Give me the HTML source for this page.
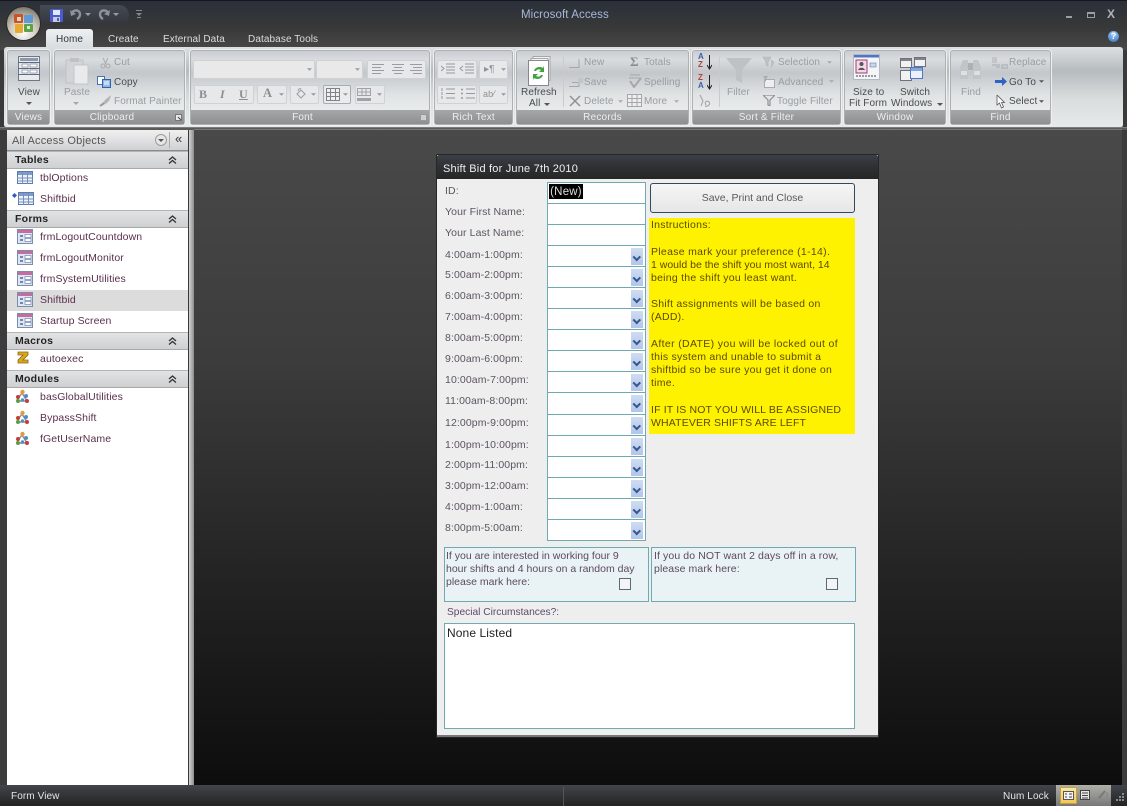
<!DOCTYPE html>
<html><head><meta charset="utf-8"><title>Microsoft Access</title>
<style>
html,body{margin:0;padding:0;background:#333}
#r{position:relative;width:1127px;height:806px;overflow:hidden;background:#3a3a3a;font-family:"Liberation Sans",sans-serif;font-size:10.5px;letter-spacing:.25px;color:#444}
#r div,#r span.a,#r svg.a{position:absolute}
.t{white-space:nowrap;line-height:13px}
.grp{top:50px;height:75px;background:linear-gradient(#c9cdd1 0,#d9dcdf 12%,#c3c7cb 30%,#dfe3e4 60%,#e8eced 82%);border:1px solid #aeb1b3;border-radius:3px;box-sizing:border-box;box-shadow:0 0 0 1px #eef0f0;font-size:10px;letter-spacing:.1px}
.cap{left:0;right:0;bottom:0;height:14px;background:linear-gradient(#a5a7a8,#8d8f90);color:#eee;text-align:center;line-height:16px;font-size:10px;letter-spacing:.2px;box-sizing:border-box}
.dis{color:#9a9d9f}
.en{color:#4a4c4e}
.box{background:#e6e8ea;border:1px solid #cfd2d4;border-radius:2px;box-sizing:border-box}
.sec{left:0;height:16px;background:linear-gradient(#e2e3e4,#cfd0d1);border-top:1px solid #b4b5b6;border-bottom:1px solid #a8a9aa;color:#222;font-weight:bold;font-size:10.5px;line-height:16px;padding-left:8px;width:173px}
.nav{left:33px;color:#5a2f4c;font-size:10.5px;letter-spacing:.1px;white-space:nowrap;line-height:15px}
.fld{left:547px;width:99px;background:#fff;border:1px solid #6fa9b1;box-sizing:border-box}
.lb{left:445px;color:#5c5460;white-space:nowrap;font-size:10.5px;letter-spacing:.1px;line-height:15px}
.dd{left:83px;top:2px;width:12px;height:17px;background:linear-gradient(#cfdcf2,#b2c6ea)}
.dd:after{content:"";position:absolute;left:3px;top:6px;width:3.5px;height:3.5px;border-right:2px solid #36588f;border-bottom:2px solid #36588f;transform:rotate(45deg)}
.y{left:651px;color:#5a4a00;white-space:nowrap;font-size:10.5px;line-height:15px}
.tab{top:33px;color:#dcdcdc;font-size:10px;letter-spacing:.1px}
</style></head><body>
<div id="r">
<svg width="0" height="0" style="position:absolute"><defs>
<symbol id="fi" viewBox="0 0 16 15"><rect x=".5" y=".5" width="15" height="14" fill="#dfe6f2" stroke="#7c8cab"/><rect x="1" y="1" width="14" height="3" fill="#c46d9e"/><rect x="3" y="6" width="3" height="2" fill="#6e87b3"/><rect x="3" y="10" width="3" height="2" fill="#6e87b3"/><rect x="8" y="5.500" width="6" height="3" fill="#fff" stroke="#6e87b3" stroke-width=".7"/><rect x="8" y="9.500" width="6" height="3" fill="#fff" stroke="#6e87b3" stroke-width=".7"/></symbol>
<symbol id="tb" viewBox="0 0 16 13"><rect x=".5" y=".5" width="15" height="12" fill="#eef2fa" stroke="#5f7bab"/><rect x="1" y="1" width="14" height="3" fill="#7f9bc9"/><path d="M0 7h16M0 10h16M5.500 1v12M10.500 1v12" stroke="#7590bb" stroke-width="1"/></symbol>
<symbol id="md" viewBox="0 0 15 14"><path d="M2 11L7 4M7 4l5 8M3 12h9" stroke="#8f8f8f" stroke-width="1.500" fill="none"/><circle cx="7.500" cy="3" r="2.200" fill="#e39a3d"/><circle cx="3" cy="8" r="2" fill="#c63d33"/><circle cx="11" cy="7" r="2" fill="#4b8fcf"/><circle cx="3" cy="12" r="2" fill="#5a9e48"/><circle cx="12" cy="12" r="2" fill="#c63d33"/><circle cx="7.500" cy="11" r="1.700" fill="#4b8fcf"/></symbol>
<symbol id="dn" viewBox="0 0 6 3"><path d="M0 0h6L3 3z"/></symbol>
<symbol id="ch" viewBox="0 0 9 8"><path d="M1 4l3.500-3L8 4M1 7.500l3.500-3L8 7.500" fill="none" stroke="#333" stroke-width="1.300"/></symbol>
</defs></svg>

<!-- title bar -->
<div style="left:0;top:0;width:1127px;height:27px;background:linear-gradient(#2a2f3a 0,#2f3339 40%,#383838 100%)"></div>
<div style="left:0;top:27px;width:1127px;height:23px;background:linear-gradient(#383838,#484848)"></div>
<div style="left:0;top:0;width:1127px;height:1px;background:#15171c"></div>
<div style="left:40px;top:5px;width:89px;height:20px;background:linear-gradient(#444a55,#34363b);border-radius:0 11px 11px 0"></div>

<!-- office button -->
<div style="left:7px;top:7px;width:33px;height:33px;border-radius:50%;background:radial-gradient(circle at 50% 78%,#fff 0,#ccc6b8 45%,#8f8a7f 75%,#57534c 100%);box-shadow:0 0 0 1px #2a2a2a"></div>
<svg class="a" style="left:13px;top:13px" width="22" height="22" viewBox="0 0 22 22"><rect x="1" y="1" width="9" height="9" rx="1" fill="#c9542a"/><rect x="11" y="2" width="9" height="8" rx="1" fill="#5d9ad6"/><rect x="2" y="11" width="8" height="9" rx="1" fill="#e9a92f"/><rect x="11" y="11" width="9" height="8" rx="1" fill="#5fa04a"/><rect x="4" y="4" width="4" height="4" fill="#f3d4b5"/><rect x="14" y="13" width="3" height="3" fill="#d6ecc9"/></svg>

<!-- QAT -->
<svg class="a" style="left:50px;top:9px" width="13" height="13" viewBox="0 0 13 13"><rect width="13" height="13" rx="1" fill="#4a5bd0"/><rect x="3" y="1" width="7" height="5" fill="#dfe6ff"/><rect x="3" y="8" width="7" height="5" fill="#c9cbd6"/><rect x="7" y="9" width="2" height="3" fill="#4a5bd0"/></svg>
<svg class="a" style="left:70px;top:8px" width="12" height="13" viewBox="0 0 12 13"><path d="M2 5C4 1 10 2 10 6c0 2-1 4-3 5" fill="none" stroke="#8e939a" stroke-width="2.400"/><path d="M0 2l1 6 5-2z" fill="#8e939a"/></svg>
<svg class="a" style="left:85px;top:13px" width="6" height="3"><use href="#dn" fill="#9a9ea3"/></svg>
<svg class="a" style="left:98px;top:8px" width="12" height="13" viewBox="0 0 12 13"><path d="M10 5C8 1 2 2 2 6c0 2 1 4 3 5" fill="none" stroke="#8e939a" stroke-width="2.400"/><path d="M12 2l-1 6-5-2z" fill="#8e939a"/></svg>
<svg class="a" style="left:113px;top:13px" width="6" height="3"><use href="#dn" fill="#9a9ea3"/></svg>
<svg class="a" style="left:136px;top:10px" width="6" height="9" viewBox="0 0 6 9"><path d="M0 0h6v1H0zM0 3h6L3 6z M1 7h4v1H1z" fill="#85888c"/></svg>

<div class="t" style="left:521px;top:9px;color:#a8b8d8;font-size:11.500px;letter-spacing:.1px">Microsoft Access</div>

<!-- window buttons -->
<div style="left:1066px;top:16px;width:6px;height:2px;background:#9b9ea2"></div>
<div style="left:1087px;top:12px;width:8px;height:6px;border:1px solid #9b9ea2;border-top-width:2px;box-sizing:border-box"></div>
<div class="t" style="left:1107px;top:8px;color:#b0b3b7;font-weight:bold;font-size:12px">X</div>

<!-- tabs -->
<div style="left:46px;top:29px;width:47px;height:19px;background:linear-gradient(#eef1f3,#d7dde0);border-radius:3px 3px 0 0"></div>
<div class="t tab" style="left:56px;color:#333">Home</div>
<div class="t tab" style="left:108px">Create</div>
<div class="t tab" style="left:163px">External Data</div>
<div class="t tab" style="left:248px">Database Tools</div>
<div style="left:1108px;top:31px;width:11px;height:11px;border-radius:50%;background:radial-gradient(circle at 50% 30%,#a9cdf2,#2b6fc0);color:#fff;font-size:9px;font-weight:bold;line-height:11px;text-align:center;letter-spacing:0">?</div>

<!-- ribbon -->
<div style="left:4px;top:47px;width:1119px;height:81px;background:linear-gradient(#dde0e2 0,#b6bbbf 30%,#d9dddd 65%,#e6eaea 100%);border-radius:3px;border-bottom:1px solid #888;box-sizing:border-box"></div>

<!-- Views -->
<div class="grp" style="left:7px;width:43px"><div class="cap">Views</div>
<svg class="a" style="left:10px;top:5px" width="22" height="25" viewBox="0 0 22 25"><rect x=".5" y=".5" width="21" height="24" fill="#e8eaee" stroke="#6f7886"/><path d="M0 6.500h22M0 12.500h22M0 18.500h22" stroke="#5f6b80"/><rect x="2" y="2" width="18" height="3" fill="#8d98aa"/><rect x="4" y="8" width="6" height="3" fill="#fff" stroke="#7c8797" stroke-width=".7"/><rect x="12" y="8" width="7" height="3" fill="#fff" stroke="#7c8797" stroke-width=".7"/><rect x="4" y="14" width="6" height="3" fill="#fff" stroke="#7c8797" stroke-width=".7"/><rect x="12" y="14" width="7" height="3" fill="#fff" stroke="#7c8797" stroke-width=".7"/></svg>
<div class="t en" style="left:10px;top:35px">View</div>
<svg class="a" style="left:18px;top:51px" width="6" height="3"><use href="#dn" fill="#555"/></svg></div>

<!-- Clipboard -->
<div class="grp" style="left:54px;width:131px"><div class="cap" style="padding-right:15px">Clipboard</div>
<svg class="a" style="left:10px;top:6px" width="24" height="28" viewBox="0 0 24 28"><rect x="1" y="3" width="17" height="23" fill="#d2d4d6" stroke="#c0c2c4"/><rect x="9" y="8" width="14" height="19" fill="#e9eaeb" stroke="#c4c6c8"/><rect x="5" y="1" width="9" height="4" fill="#bfc1c3"/></svg>
<div class="t dis" style="left:9px;top:35px">Paste</div>
<svg class="a" style="left:18px;top:51px" width="6" height="3"><use href="#dn" fill="#a5a7a9"/></svg>
<svg class="a" style="left:45px;top:6px" width="11" height="12" viewBox="0 0 11 12"><path d="M3 1l3 6M8 1L5 7" stroke="#a9acae" fill="none"/><circle cx="3" cy="9" r="2" fill="none" stroke="#a9acae"/><circle cx="8" cy="9" r="2" fill="none" stroke="#a9acae"/></svg>
<div class="t dis" style="left:59px;top:5px">Cut</div>
<svg class="a" style="left:42px;top:25px" width="14" height="12" viewBox="0 0 14 12"><rect x=".5" y=".5" width="7" height="8" fill="#fff" stroke="#3f74b5"/><rect x="5.500" y="3.500" width="8" height="8" fill="#8fb6e6" stroke="#2f62a8"/><path d="M7 6h5M7 8h5" stroke="#fff"/></svg>
<div class="t en" style="left:59px;top:25px">Copy</div>
<svg class="a" style="left:44px;top:43px" width="13" height="13" viewBox="0 0 13 13"><path d="M3 12C3 8 7 5 12 1c-1 5-3 8-6 9z" fill="#b3b5b7"/><path d="M1 12l4-3" stroke="#9b9d9f" stroke-width="2"/></svg>
<div class="t dis" style="left:59px;top:44px">Format Painter</div>
<svg class="a" style="left:120px;top:63px" width="7" height="7" viewBox="0 0 7 7"><rect x=".5" y=".5" width="6" height="6" fill="#e8e8e8" stroke="#777"/><path d="M3 3l3 3" stroke="#444"/></svg></div>

<!-- Font -->
<div class="grp" style="left:190px;width:240px"><div class="cap" style="padding-right:15px">Font</div>
<div class="box" style="left:2px;top:9px;width:122px;height:19px;background:#e9e9ea"></div>
<div class="box" style="left:125px;top:9px;width:47px;height:19px;background:#e9e9ea"></div>
<svg class="a" style="left:116px;top:17px" width="5" height="3"><use href="#dn" fill="#999"/></svg>
<svg class="a" style="left:164px;top:17px" width="5" height="3"><use href="#dn" fill="#999"/></svg>
<div class="box" style="left:176px;top:9px;width:59px;height:19px"></div>
<svg class="a" style="left:181px;top:13px" width="50" height="11" viewBox="0 0 50 11"><path d="M0 .5h12M0 3.500h9M0 6.500h12M0 9.500h9M20 .5h12M22 3.500h8M20 6.500h12M22 9.500h8M38 .5h12M41 3.500h9M38 6.500h12M41 9.500h9" stroke="#9a9c9f"/></svg>
<div class="box" style="left:3px;top:34px;width:60px;height:19px"></div>
<div class="t" style="left:8px;top:37px;font-weight:bold;font-family:'Liberation Serif',serif;color:#8c8e90;font-size:12px">B</div>
<div class="t" style="left:29px;top:37px;font-style:italic;font-family:'Liberation Serif',serif;color:#8c8e90;font-size:12px;font-weight:bold">I</div>
<div class="t" style="left:48px;top:37px;text-decoration:underline;font-weight:bold;font-family:'Liberation Serif',serif;color:#8c8e90;font-size:12px">U</div>
<div class="box" style="left:66px;top:34px;width:30px;height:19px"></div>
<div class="t" style="left:72px;top:36px;font-weight:bold;font-family:'Liberation Serif',serif;color:#8c8e90;font-size:12.500px">A</div>
<svg class="a" style="left:88px;top:42px" width="5" height="3"><use href="#dn" fill="#999"/></svg>
<div class="box" style="left:99px;top:34px;width:29px;height:19px"></div>
<svg class="a" style="left:104px;top:37px" width="12" height="12" viewBox="0 0 12 12"><path d="M2 6l4-4 4 4-4 4z" fill="none" stroke="#9a9c9f"/><path d="M6 1c-1-1-3 0-3 2" stroke="#9a9c9f" fill="none"/></svg>
<svg class="a" style="left:120px;top:42px" width="5" height="3"><use href="#dn" fill="#999"/></svg>
<div class="box" style="left:132px;top:34px;width:28px;height:19px;background:#e9ebec;border-color:#a9acae"></div>
<svg class="a" style="left:135px;top:37px" width="14" height="13" viewBox="0 0 14 13"><path d="M.5.5h13v12H.5zM.5 4.500h13M.5 8.500h13M4.500.5v12M9.500.5v12" fill="#f0f0f0" stroke="#808286"/></svg>
<svg class="a" style="left:152px;top:42px" width="5" height="3"><use href="#dn" fill="#999"/></svg>
<div class="box" style="left:164px;top:34px;width:30px;height:19px"></div>
<svg class="a" style="left:166px;top:37px" width="14" height="13" viewBox="0 0 14 13"><path d="M.5.500h13v7H.5zM.5 4h13M5 .5v7M9 .5v7" fill="none" stroke="#a0a2a5"/><rect y="10" width="14" height="3" fill="#a0a2a5"/></svg>
<svg class="a" style="left:186px;top:42px" width="5" height="3"><use href="#dn" fill="#999"/></svg>
<svg class="a" style="left:229px;top:63px" width="7" height="7" viewBox="0 0 7 7"><rect x=".5" y=".5" width="6" height="6" fill="#cfcfcf" stroke="#999"/></svg></div>

<!-- Rich Text -->
<div class="grp" style="left:434px;width:79px"><div class="cap">Rich Text</div>
<div class="box" style="left:2px;top:9px;width:40px;height:19px"></div>
<div class="box" style="left:44px;top:9px;width:29px;height:19px"></div>
<div class="box" style="left:2px;top:34px;width:40px;height:19px"></div>
<div class="box" style="left:44px;top:34px;width:29px;height:19px"></div>
<svg class="a" style="left:6px;top:12px" width="34" height="12" viewBox="0 0 34 12"><path d="M5 1h9M5 4h9M5 7h9M5 10h9M0 3l3 2.500L0 8M24 1h9M24 4h9M24 7h9M24 10h9M22 3l-3 2.500L22 8" stroke="#96989b" fill="none"/></svg>
<div class="t" style="left:49px;top:12px;color:#909295;font-size:10px">▸¶</div>
<svg class="a" style="left:66px;top:17px" width="5" height="3"><use href="#dn" fill="#999"/></svg>
<svg class="a" style="left:6px;top:37px" width="34" height="12" viewBox="0 0 34 12"><path d="M5 1h9M5 5.500h9M5 10h9M1 0v3M1 4v3M1 8v3M25 1h9M25 5.500h9M25 10h9" stroke="#96989b" fill="none"/><circle cx="21" cy="1.500" r="1" fill="#96989b"/><circle cx="21" cy="5.500" r="1" fill="#96989b"/><circle cx="21" cy="10" r="1" fill="#96989b"/></svg>
<div class="t" style="left:48px;top:37px;color:#909295;font-size:9px">ab⁄</div>
<svg class="a" style="left:66px;top:42px" width="5" height="3"><use href="#dn" fill="#999"/></svg></div>

<!-- Records -->
<div class="grp" style="left:516px;width:173px"><div class="cap">Records</div>
<svg class="a" style="left:11px;top:5px" width="24" height="30" viewBox="0 0 24 30"><rect x="5" y=".5" width="17" height="24" fill="#f4f4f4" stroke="#a5a7aa"/><rect x="3" y="2.500" width="17" height="24" fill="#f6f6f6" stroke="#a5a7aa"/><rect x=".5" y="4.500" width="20" height="25" fill="#fff" stroke="#85888c"/><path d="M6 15c1-4 6-5 9-3l1-2v6h-5l2-2c-2-1-4-1-5 1zM15 19c-1 4-6 5-9 3l-1 2v-6h5l-2 2c2 1 4 1 5-1z" fill="#3fa33f"/></svg>
<div class="t en" style="left:4px;top:35px">Refresh</div>
<div class="t en" style="left:12px;top:46px">All</div>
<svg class="a" style="left:27px;top:52px" width="6" height="3"><use href="#dn" fill="#555"/></svg>
<div style="left:46px;top:6px;width:1px;height:50px;background:#c8cacc"></div>
<svg class="a" style="left:52px;top:7px" width="14" height="11" viewBox="0 0 14 11"><path d="M0 9.500h10M10 1v9" stroke="#a5a7a9" fill="none"/></svg>
<div class="t dis" style="left:67px;top:5px">New</div>
<svg class="a" style="left:52px;top:26px" width="14" height="11" viewBox="0 0 14 11"><path d="M0 9.500h10M3 5.500h7M10 1v9" stroke="#a5a7a9" fill="none"/><rect x="9" y="1" width="5" height="5" fill="#c3c5c7"/></svg>
<div class="t dis" style="left:67px;top:25px">Save</div>
<svg class="a" style="left:52px;top:44px" width="12" height="12" viewBox="0 0 12 12"><path d="M1 1l10 10M11 1L1 11" stroke="#8f9194" stroke-width="1.500"/></svg>
<div class="t dis" style="left:67px;top:44px">Delete</div>
<svg class="a" style="left:101px;top:49px" width="5" height="3"><use href="#dn" fill="#aaa"/></svg>
<div class="t" style="left:113px;top:4px;color:#8a8c8f;font-size:13px;font-family:'Liberation Serif',serif;font-weight:bold">Σ</div>
<div class="t dis" style="left:127px;top:5px">Totals</div>
<svg class="a" style="left:111px;top:23px" width="15" height="14" viewBox="0 0 15 14"><path d="M1 4h12M2 1h10" stroke="#a5a7a9"/><path d="M2 7l4 6 7-9" stroke="#a5a7a9" stroke-width="2" fill="none"/></svg>
<div class="t dis" style="left:127px;top:25px">Spelling</div>
<svg class="a" style="left:110px;top:43px" width="15" height="13" viewBox="0 0 15 13"><path d="M.5.5h14v12H.5zM.5 4.500h14M.5 8.500h14M5 .5v12M10 .5v12" fill="#eee" stroke="#a5a7a9"/></svg>
<div class="t dis" style="left:127px;top:44px">More</div>
<svg class="a" style="left:157px;top:49px" width="5" height="3"><use href="#dn" fill="#aaa"/></svg></div>

<!-- Sort -->
<div class="grp" style="left:692px;width:149px"><div class="cap">Sort &amp; Filter</div>
<div class="t" style="left:5px;top:2px;font-size:8px;line-height:8px;color:#3d5fa8;font-weight:bold;white-space:normal;width:8px;letter-spacing:0">A<br><span style="color:#b2413b">Z</span></div>
<svg class="a" style="left:14px;top:4px" width="5" height="15" viewBox="0 0 5 15"><path d="M2.500 0v13M0 10l2.500 4L5 10" stroke="#222" fill="none"/></svg>
<div class="t" style="left:5px;top:23px;font-size:8px;line-height:8px;color:#b2413b;font-weight:bold;white-space:normal;width:8px;letter-spacing:0">Z<br><span style="color:#3d5fa8">A</span></div>
<svg class="a" style="left:14px;top:24px" width="5" height="15" viewBox="0 0 5 15"><path d="M2.500 0v13M0 10l2.500 4L5 10" stroke="#222" fill="none"/></svg>
<svg class="a" style="left:5px;top:43px" width="15" height="14" viewBox="0 0 15 14"><path d="M2 1l3 6-2 5M7 12c3 1 6-2 4-4s-5 0-3 3" stroke="#9da0a3" fill="none"/></svg>
<div style="left:26px;top:6px;width:1px;height:50px;background:#c8cacc"></div>
<svg class="a" style="left:33px;top:7px" width="26" height="26" viewBox="0 0 26 26"><path d="M0 0h26L16 12v13l-6-3V12z" fill="#bfc2c5"/></svg>
<div class="t dis" style="left:34px;top:35px">Filter</div>
<svg class="a" style="left:69px;top:5px" width="13" height="13" viewBox="0 0 13 13"><path d="M1 1h8L6 6v4L4 9V6zM9 4l3 2-3 6" fill="#bfc2c5" stroke="#b0b3b5" stroke-width=".6"/></svg>
<div class="t dis" style="left:85px;top:5px">Selection</div>
<svg class="a" style="left:134px;top:10px" width="5" height="3"><use href="#dn" fill="#aaa"/></svg>
<svg class="a" style="left:69px;top:25px" width="13" height="12" viewBox="0 0 13 12"><rect x="2.500" y="3.500" width="10" height="8" fill="#eee" stroke="#a9acae"/><path d="M1 0h5L4 3v3L3 5V3z" fill="#a9acae"/></svg>
<div class="t dis" style="left:85px;top:25px">Advanced</div>
<svg class="a" style="left:136px;top:29px" width="5" height="3"><use href="#dn" fill="#aaa"/></svg>
<svg class="a" style="left:70px;top:44px" width="12" height="11" viewBox="0 0 12 11"><path d="M0 0h12L7 5v6L5 10V5z" fill="none" stroke="#8f9194" stroke-width="1.200"/></svg>
<div class="t dis" style="left:84px;top:44px">Toggle Filter</div></div>

<!-- Window -->
<div class="grp" style="left:844px;width:102px"><div class="cap">Window</div>
<svg class="a" style="left:8px;top:3px" width="27" height="26" viewBox="0 0 27 26"><rect x=".5" y=".5" width="26" height="25" fill="#f5f5f7" stroke="#b4b7c4"/><rect x="1" y="1" width="25" height="2.500" fill="#4e76c6"/><rect x="3" y="6" width="11" height="13" fill="#f2d9e6" stroke="#a03a72"/><circle cx="8.500" cy="10" r="2" fill="#555"/><path d="M5 16c1-3 6-3 7 0" fill="#555"/><rect x="17" y="9" width="6" height="4" fill="#c9d5ea" stroke="#7a8fb5" stroke-width=".7"/><path d="M3 22h20" stroke="#7a7f8a" stroke-dasharray="2 1" stroke-width="1.500"/></svg>
<svg class="a" style="left:55px;top:6px" width="26" height="25" viewBox="0 0 26 25"><rect x=".5" y="1.500" width="11" height="9" fill="#f2f2f2" stroke="#6f7278"/><rect x="1" y="2" width="10" height="2" fill="#7f8287"/><rect x=".5" y="13.500" width="11" height="10" fill="#f2f2f2" stroke="#6f7278"/><rect x="14.500" y=".5" width="11" height="9" fill="#f2f2f2" stroke="#6f7278"/><rect x="15" y="1" width="10" height="2" fill="#7f8287"/><rect x="10.500" y="10.500" width="12" height="11" fill="#eaf1fb" stroke="#4e76c6"/><rect x="11" y="11" width="11" height="3" fill="#83a6de"/></svg>
<div class="t en" style="left:8px;top:35px">Size to</div>
<div class="t en" style="left:4px;top:46px">Fit Form</div>
<div class="t en" style="left:55px;top:35px">Switch</div>
<div class="t en" style="left:46px;top:46px">Windows</div>
<svg class="a" style="left:92px;top:52px" width="6" height="3"><use href="#dn" fill="#555"/></svg></div>

<!-- Find -->
<div class="grp" style="left:950px;width:101px"><div class="cap">Find</div>
<svg class="a" style="left:7px;top:5px" width="25" height="25" viewBox="0 0 25 25"><path d="M2 23V11l3-7h5v19zM15 23V4h5l3 7v12z" fill="#c2c5c7"/><rect x="10" y="7" width="5" height="7" fill="#aeb1b3"/><path d="M3 17h6M16 17h6" stroke="#dde0e1" stroke-width="4"/></svg>
<div class="t dis" style="left:10px;top:35px">Find</div>
<svg class="a" style="left:41px;top:6px" width="16" height="12" viewBox="0 0 16 12"><rect x="0" y="0" width="5" height="6" fill="#c3c5c7"/><path d="M0 8h8M4 10h4M10 8h6v3h-6z" stroke="#a9acae" fill="none"/></svg>
<div class="t dis" style="left:58px;top:5px">Replace</div>
<svg class="a" style="left:44px;top:26px" width="12" height="9" viewBox="0 0 12 9"><path d="M0 3h7V0l5 4.500L7 9V6H0z" fill="#2e62c4"/></svg>
<div class="t en" style="left:58px;top:25px">Go To</div>
<svg class="a" style="left:88px;top:29px" width="5" height="3"><use href="#dn" fill="#555"/></svg>
<svg class="a" style="left:45px;top:44px" width="10" height="14" viewBox="0 0 10 14"><path d="M1 0v10l2.500-2 2 5 2-1-2-4.500H8.500z" fill="#fff" stroke="#555" stroke-width=".8"/></svg>
<div class="t en" style="left:58px;top:44px">Select</div>
<svg class="a" style="left:88px;top:49px" width="5" height="3"><use href="#dn" fill="#555"/></svg></div>

<!-- frame around -->
<div style="left:0;top:128px;width:1127px;height:2px;background:#5a5a58"></div>
<div style="left:0;top:127px;width:1127px;height:1px;background:#7c7c7a"></div>
<div style="left:189px;top:130px;width:5px;height:655px;background:linear-gradient(90deg,#d3d3d3,#aaa 60%,#8c8c8c)"></div>

<!-- main -->
<div style="left:194px;top:129px;width:928px;height:656px;background:linear-gradient(#494949 0,#3c3c3c 35%,#222 70%,#0d0d0d 100%);border-top:1px solid #7b7b75;box-sizing:border-box"></div>
<div style="left:1122px;top:130px;width:5px;height:655px;background:#3c3c3c"></div>
<div style="left:0;top:130px;width:7px;height:655px;background:#3c3c3c"></div>

<!-- nav pane -->
<div style="left:7px;top:130px;width:181px;height:655px;background:#fff">
<div style="left:0;top:0;width:181px;height:21px;background:linear-gradient(#f0f0f1,#d0d1d3);border-bottom:1px solid #8a8b8c;box-sizing:border-box"></div>
<div class="t" style="left:5px;top:5px;color:#555;font-size:11px;letter-spacing:.2px">All Access Objects</div>
<div style="left:148px;top:4px;width:12px;height:12px;border:1px solid #9a9b9d;border-radius:50%;box-sizing:border-box;background:#e6e6e7"></div>
<svg class="a" style="left:151px;top:9px" width="6" height="3"><use href="#dn" fill="#555"/></svg>
<div style="left:162px;top:2px;width:1px;height:16px;background:#aaa"></div>
<div class="t" style="left:168px;top:2px;color:#333;font-size:13px;font-weight:normal;letter-spacing:0">«</div>

<div class="sec" style="top:21px">Tables<svg class="a" style="left:161px;top:4px" width="9" height="8"><use href="#ch"/></svg></div>
<svg class="a" style="left:10px;top:41px" width="16" height="13"><use href="#tb"/></svg>
<div class="nav" style="top:41px">tblOptions</div>
<svg class="a" style="left:5px;top:63px" width="5" height="5" viewBox="0 0 5 5"><path d="M2.500 0L5 2.500 2.500 5 0 2.500z" fill="#2a5fc0"/></svg>
<svg class="a" style="left:11px;top:62px" width="16" height="13"><use href="#tb"/></svg>
<div class="nav" style="top:62px">Shiftbid</div>

<div class="sec" style="top:80px">Forms<svg class="a" style="left:161px;top:4px" width="9" height="8"><use href="#ch"/></svg></div>
<svg class="a" style="left:10px;top:99px" width="16" height="15"><use href="#fi"/></svg>
<div class="nav" style="top:100px">frmLogoutCountdown</div>
<svg class="a" style="left:10px;top:120px" width="16" height="15"><use href="#fi"/></svg>
<div class="nav" style="top:121px">frmLogoutMonitor</div>
<svg class="a" style="left:10px;top:141px" width="16" height="15"><use href="#fi"/></svg>
<div class="nav" style="top:142px">frmSystemUtilities</div>
<div style="left:0;top:160px;width:181px;height:21px;background:#dcdcdc"></div>
<svg class="a" style="left:10px;top:162px" width="16" height="15"><use href="#fi"/></svg>
<div class="nav" style="top:163px">Shiftbid</div>
<svg class="a" style="left:10px;top:183px" width="16" height="15"><use href="#fi"/></svg>
<div class="nav" style="top:184px">Startup Screen</div>

<div class="sec" style="top:202px">Macros<svg class="a" style="left:161px;top:4px" width="9" height="8"><use href="#ch"/></svg></div>
<svg class="a" style="left:10px;top:221px" width="12" height="13" viewBox="0 0 12 13"><path d="M1 1h10v3L6 9h5v3H1V9l5-5H1z" fill="#d9a520" stroke="#8a6a10" stroke-width=".8"/></svg>
<div class="nav" style="top:222px">autoexec</div>

<div class="sec" style="top:240px">Modules<svg class="a" style="left:161px;top:4px" width="9" height="8"><use href="#ch"/></svg></div>
<svg class="a" style="left:8px;top:259px" width="15" height="14"><use href="#md"/></svg>
<div class="nav" style="top:260px">basGlobalUtilities</div>
<svg class="a" style="left:8px;top:280px" width="15" height="14"><use href="#md"/></svg>
<div class="nav" style="top:281px">BypassShift</div>
<svg class="a" style="left:8px;top:301px" width="15" height="14"><use href="#md"/></svg>
<div class="nav" style="top:302px">fGetUserName</div>
</div>

<!-- form -->
<div style="left:437px;top:155px;width:441px;height:582px;background:#eeeeee;box-shadow:0 0 0 1px #262626;border-bottom:2px solid #777;box-sizing:border-box"></div>
<div style="left:437px;top:155px;width:441px;height:24px;background:linear-gradient(#3d4048,#33353a 30%,#262626);border-radius:2px 2px 0 0"></div>
<div class="t" style="left:443px;top:163px;color:#f0f0f0;font-size:11px;letter-spacing:.2px">Shift Bid for June 7th 2010</div>

<div class="lb" style="top:184px">ID:</div>
<div class="lb" style="top:205px">Your First Name:</div>
<div class="lb" style="top:226px">Your Last Name:</div>
<div class="lb" style="top:248px">4:00am-1:00pm:</div>
<div class="lb" style="top:268px">5:00am-2:00pm:</div>
<div class="lb" style="top:289px">6:00am-3:00pm:</div>
<div class="lb" style="top:310px">7:00am-4:00pm:</div>
<div class="lb" style="top:331px">8:00am-5:00pm:</div>
<div class="lb" style="top:352px">9:00am-6:00pm:</div>
<div class="lb" style="top:373px">10:00am-7:00pm:</div>
<div class="lb" style="top:394px">11:00am-8:00pm:</div>
<div class="lb" style="top:416px">12:00pm-9:00pm:</div>
<div class="lb" style="top:438px">1:00pm-10:00pm:</div>
<div class="lb" style="top:458px">2:00pm-11:00pm:</div>
<div class="lb" style="top:479px">3:00pm-12:00am:</div>
<div class="lb" style="top:500px">4:00pm-1:00am:</div>
<div class="lb" style="top:521px">8:00pm-5:00am:</div>

<div class="fld" style="top:182px;height:22px"></div>
<div style="left:549px;top:184px;width:34px;height:15px;background:#000;color:#ddd;font-size:11.500px;line-height:16px;text-align:center;letter-spacing:.2px">(New)</div>
<div class="fld" style="top:203px;height:22px"></div>
<div class="fld" style="top:224px;height:22px"></div>
<div class="fld" style="top:245px;height:22px"><div class="dd"></div></div>
<div class="fld" style="top:266px;height:22px"><div class="dd"></div></div>
<div class="fld" style="top:287px;height:22px"><div class="dd"></div></div>
<div class="fld" style="top:308px;height:22px"><div class="dd"></div></div>
<div class="fld" style="top:329px;height:22px"><div class="dd"></div></div>
<div class="fld" style="top:350px;height:22px"><div class="dd"></div></div>
<div class="fld" style="top:371px;height:22px"><div class="dd"></div></div>
<div class="fld" style="top:392px;height:23px"><div class="dd"></div></div>
<div class="fld" style="top:414px;height:22px"><div class="dd"></div></div>
<div class="fld" style="top:435px;height:22px"><div class="dd"></div></div>
<div class="fld" style="top:456px;height:22px"><div class="dd"></div></div>
<div class="fld" style="top:477px;height:22px"><div class="dd"></div></div>
<div class="fld" style="top:498px;height:22px"><div class="dd"></div></div>
<div class="fld" style="top:519px;height:22px"><div class="dd"></div></div>

<!-- button -->
<div style="left:650px;top:183px;width:205px;height:30px;background:linear-gradient(#f6f6f6,#e6e6e6);border:1px solid #2d4a5e;border-radius:3px;box-sizing:border-box;text-align:center;line-height:29px;color:#5a5a5a;font-size:10.500px;letter-spacing:0">Save, Print and Close</div>

<!-- yellow -->
<div style="left:649px;top:218px;width:206px;height:216px;background:#fff200"></div>
<div class="y" style="top:218px">Instructions:</div>
<div class="y" style="top:245px;letter-spacing:.3px">Please mark your preference (1-14).</div>
<div class="y" style="top:258px;letter-spacing:0">1 would be the shift you most want, 14</div>
<div class="y" style="top:271px;letter-spacing:.25px">being the shift you least want.</div>
<div class="y" style="top:297px">Shift assignments will be based on</div>
<div class="y" style="top:310px">(ADD).</div>
<div class="y" style="top:337px;letter-spacing:.35px">After (DATE) you will be locked out of</div>
<div class="y" style="top:350px">this system and unable to submit a</div>
<div class="y" style="top:363px">shiftbid so be sure you get it done on</div>
<div class="y" style="top:376px">time.</div>
<div class="y" style="top:403px;letter-spacing:.15px">IF IT IS NOT YOU WILL BE ASSIGNED</div>
<div class="y" style="top:416px;letter-spacing:.15px">WHATEVER SHIFTS ARE LEFT</div>

<!-- option boxes -->
<div style="left:444px;top:547px;width:205px;height:55px;background:#e9f2f5;border:1px solid #6fa9b1;box-sizing:border-box"></div>
<div style="left:651px;top:547px;width:205px;height:55px;background:#e9f2f5;border:1px solid #6fa9b1;box-sizing:border-box"></div>
<div class="lb" style="left:446px;top:549px;color:#5c4a5e;letter-spacing:0">If you are interested in working four 9</div>
<div class="lb" style="left:446px;top:562px;color:#5c4a5e;letter-spacing:0">hour shifts and 4 hours on a random day</div>
<div class="lb" style="left:446px;top:575px;color:#5c4a5e;letter-spacing:0">please mark here:</div>
<div class="lb" style="left:654px;top:549px;color:#5c4a5e;letter-spacing:.1px">If you do NOT want 2 days off in a row,</div>
<div class="lb" style="left:654px;top:562px;color:#5c4a5e;letter-spacing:.1px">please mark here:</div>
<div style="left:619px;top:578px;width:12px;height:12px;background:#f2f4f6;border:1px solid #5b6a7a;box-sizing:border-box"></div>
<div style="left:826px;top:578px;width:12px;height:12px;background:#f2f4f6;border:1px solid #5b6a7a;box-sizing:border-box"></div>

<div class="lb" style="left:447px;top:605px;color:#5c4a6a;font-size:10.200px;letter-spacing:0">Special Circumstances?:</div>
<div style="left:444px;top:623px;width:411px;height:106px;background:#fff;border:1px solid #6fa9b1;box-sizing:border-box"></div>
<div class="t" style="left:447px;top:627px;color:#222;font-size:12px;letter-spacing:.1px">None Listed</div>

<!-- status bar -->
<div style="left:0;top:785px;width:1127px;height:21px;background:linear-gradient(#42454c,#35373b 40%,#232323)"></div>
<div class="t" style="left:11px;top:790px;color:#e4e4e4;font-size:10px;letter-spacing:.1px">Form View</div>
<div style="left:563px;top:787px;width:1px;height:19px;background:#555"></div>
<div class="t" style="left:1003px;top:790px;color:#e4e4e4;font-size:10px;letter-spacing:.1px">Num Lock</div>
<div style="left:1056px;top:785px;width:55px;height:21px;background:linear-gradient(#b0b0a8,#777)"></div>
<div style="left:1060px;top:787px;width:17px;height:17px;background:linear-gradient(#f8e8a0,#f2c858);border:1px solid #c9a03c;box-sizing:border-box"></div>
<svg class="a" style="left:1063px;top:791px" width="11" height="9" viewBox="0 0 11 9"><rect x=".5" y=".5" width="10" height="8" fill="#f2f2f2" stroke="#555"/><path d="M2 3h2M2 6h2M6 3h3M6 6h3" stroke="#444"/></svg>
<svg class="a" style="left:1080px;top:790px" width="10" height="10" viewBox="0 0 10 10"><rect x=".5" y=".5" width="9" height="9" fill="#e6e6e6" stroke="#444"/><path d="M2 3h6M2 5.500h6M2 8h6" stroke="#444"/></svg>
<svg class="a" style="left:1096px;top:789px" width="12" height="12" viewBox="0 0 12 12"><path d="M1 11h10V3" fill="none" stroke="#8a8a8a" stroke-width="1.500"/><path d="M3 9l6-7" stroke="#777" stroke-width="2"/></svg>
<svg class="a" style="left:1113px;top:792px" width="12" height="12" viewBox="0 0 12 12"><g fill="#8a8a8a"><rect x="9" y="1" width="2" height="2"/><rect x="6" y="4" width="2" height="2"/><rect x="9" y="4" width="2" height="2"/><rect x="3" y="7" width="2" height="2"/><rect x="6" y="7" width="2" height="2"/><rect x="9" y="7" width="2" height="2"/></g></svg>
</div>
</body></html>
